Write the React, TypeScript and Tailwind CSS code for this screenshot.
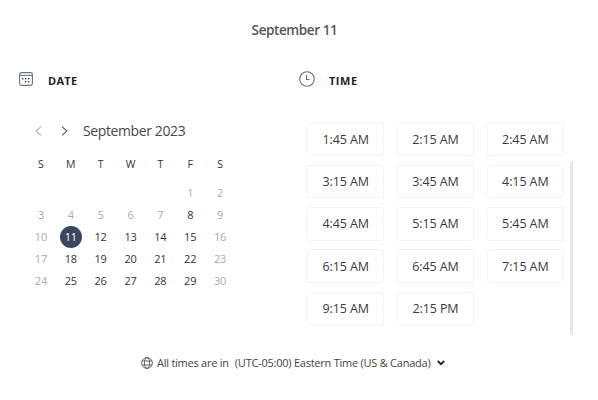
import clsx from "clsx";

const WEEKDAYS = ["S", "M", "T", "W", "T", "F", "S"];
const LEADING_BLANKS = 5;
const SELECTED_DAY = 11;
const UNAVAILABLE = [1, 2, 3, 4, 5, 6, 7, 9, 10, 16, 17, 23, 24, 30];

const TIMES = [
  "1:45 AM", "2:15 AM", "2:45 AM",
  "3:15 AM", "3:45 AM", "4:15 AM",
  "4:45 AM", "5:15 AM", "5:45 AM",
  "6:15 AM", "6:45 AM", "7:15 AM",
  "9:15 AM", "2:15 PM",
];

function CalendarIcon() {
  return (
    <svg width="14" height="14" viewBox="0 0 14 14" fill="none" stroke="#68728a" strokeWidth="1.1">
      <rect x="0.6" y="0.6" width="12.8" height="12.8" rx="1.8" />
      <path d="M0.6 3.4h12.8" />
      <g fill="#34415c" stroke="none">
        <rect x="3" y="6" width="1.4" height="1.4" />
        <rect x="6" y="6" width="1.4" height="1.4" />
        <rect x="9" y="6" width="1.4" height="1.4" />
        <rect x="6" y="9" width="1.4" height="1.4" />
        <rect x="9" y="9" width="1.4" height="1.4" />
      </g>
    </svg>
  );
}

function ClockIcon() {
  return (
    <svg width="16" height="16" viewBox="0 0 16 16" fill="none" stroke="#626b7b" strokeWidth="1.1">
      <circle cx="8" cy="8" r="7.3" />
      <path d="M7.5 4v4.5h3" />
    </svg>
  );
}

function GlobeIcon() {
  return (
    <svg width="12" height="12" viewBox="0 0 12 12" fill="none" stroke="#505050" strokeWidth="0.85">
      <circle cx="6" cy="6" r="5.4" />
      <ellipse cx="6" cy="6" rx="2.6" ry="5.4" />
      <path d="M1 4h10M1 8h10" />
    </svg>
  );
}

function Chevron({ d, color }: { d: string; color: string }) {
  return (
    <svg width="7" height="10" viewBox="0 0 7 10" fill="none" stroke={color} strokeWidth="1.05">
      <path d={d} />
    </svg>
  );
}

function Calendar() {
  return (
    <div className="ml-[26px] w-[209px]">
      <div className="flex h-5 items-center pl-[9px]">
        <button type="button" aria-label="Previous month" className="flex">
          <Chevron d="M6 0.6 1 5l5 4.4" color="#b0b0b0" />
        </button>
        <button type="button" aria-label="Next month" className="ml-[19px] flex">
          <Chevron d="M1 0.6 6 5 1 9.4" color="#5a5a5a" />
        </button>
        <span className="-mt-px ml-[15px] text-[14px] tracking-[-0.39px] whitespace-nowrap text-[#484848]">
          September 2023
        </span>
      </div>
      <div className="mt-[12.5px] grid grid-cols-7 text-center text-[10.5px] leading-5 text-[#333]">
        {WEEKDAYS.map((day, i) => (
          <span key={i}>{day}</span>
        ))}
      </div>
      <div className="mt-[8.5px] grid auto-rows-[22px] grid-cols-7 place-items-center text-[11px] tracking-[-0.2px]">
        {Array.from({ length: LEADING_BLANKS }, (_, i) => (
          <span key={`blank-${i}`} />
        ))}
        {Array.from({ length: 30 }, (_, i) => i + 1).map((day) => (
          <span
            key={day}
            className={clsx(
              "flex size-[22px] items-center justify-center rounded-full",
              day === SELECTED_DAY && "bg-[#3b475c] text-white",
              day !== SELECTED_DAY && (UNAVAILABLE.includes(day) ? "text-[#aaa]" : "text-[#333]"),
              day === 8 && "font-medium",
            )}
          >
            {day}
          </span>
        ))}
      </div>
    </div>
  );
}

function TimeSlots() {
  return (
    <div className="flex">
      <div className="mt-[0.5px] ml-[9px] grid w-[257px] auto-rows-[33.5px] grid-cols-3 gap-x-[12.5px] gap-y-[8.8px]">
        {TIMES.map((time) => (
          <button
            key={time}
            type="button"
            className="rounded-[3px] border border-[#f3f3f3] pt-[2px] text-[12.5px] tracking-[-0.1px] whitespace-nowrap text-[#3a3a3a]"
          >
            {time}
          </button>
        ))}
      </div>
      <div className="mt-[39px] ml-[6px] h-[174px] w-[3px] rounded-full bg-[#eae8e7]" />
    </div>
  );
}

export default function App() {
  return (
    <main className="h-[400px] w-[598px] overflow-hidden bg-white pt-[19px] font-['Open_Sans','Noto_Sans',sans-serif] text-[#333]">
      <h1 className="pr-[9px] text-center text-[13.5px] leading-[22px] font-semibold tracking-[-0.4px] text-[#555]">
        September 11
      </h1>
      <div className="mt-[28px] flex h-[268px]">
        <section className="w-[298px]">
          <div className="flex h-5 items-center pl-[19px]">
            <div className="-mt-[1px]"><CalendarIcon /></div>
            <h2 className="mt-[4px] ml-[15px] text-[11px] font-bold tracking-[0.3px] text-[#222]">DATE</h2>
          </div>
          <div className="mt-[32px]">
            <Calendar />
          </div>
        </section>
        <section>
          <div className="flex h-5 items-center pl-[1px]">
            <div className="-mt-[1px]"><ClockIcon /></div>
            <h2 className="mt-[4px] ml-[14px] text-[11px] font-bold tracking-[0.5px] text-[#222]">TIME</h2>
          </div>
          <div className="mt-[33px]">
            <TimeSlots />
          </div>
        </section>
      </div>
      <footer className="mt-[16px] flex h-5 items-center pl-[141px] text-[11px] tracking-[-0.24px] whitespace-nowrap text-[#444]">
        <GlobeIcon />
        <span className="ml-[4px]">All times are in</span>
        <span className="ml-[6px]">(UTC-05:00) Eastern Time (US &amp; Canada)</span>
        <svg className="ml-[7px]" width="8" height="6" viewBox="0 0 8 6" fill="none" stroke="#222" strokeWidth="1.8">
          <path d="M0.8 1 4 4.2 7.2 1" />
        </svg>
      </footer>
    </main>
  );
}
